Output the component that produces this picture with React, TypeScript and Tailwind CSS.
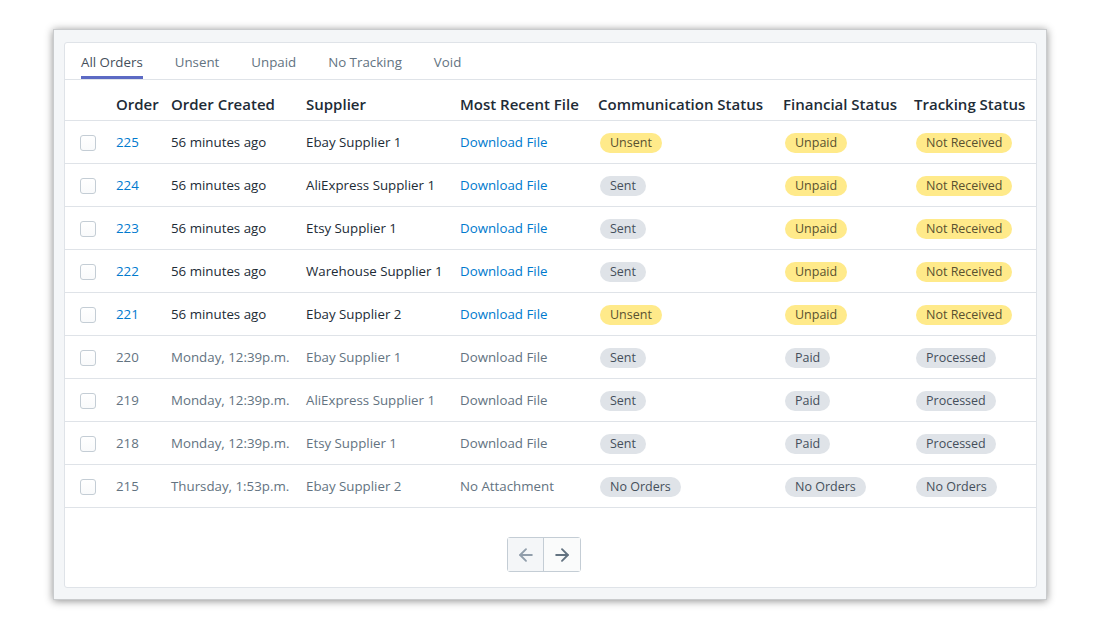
import { ArrowLeft, ArrowRight } from 'lucide-react';

type Tone = 'yellow' | 'gray';

interface Row {
  id: string;
  created: string;
  supplier: string;
  file: string;
  comm: [string, Tone];
  fin: [string, Tone];
  track: [string, Tone];
  active: boolean;
}

const rows: Row[] = [
  { id: '225', created: '56 minutes ago', supplier: 'Ebay Supplier 1', file: 'Download File', comm: ['Unsent', 'yellow'], fin: ['Unpaid', 'yellow'], track: ['Not Received', 'yellow'], active: true },
  { id: '224', created: '56 minutes ago', supplier: 'AliExpress Supplier 1', file: 'Download File', comm: ['Sent', 'gray'], fin: ['Unpaid', 'yellow'], track: ['Not Received', 'yellow'], active: true },
  { id: '223', created: '56 minutes ago', supplier: 'Etsy Supplier 1', file: 'Download File', comm: ['Sent', 'gray'], fin: ['Unpaid', 'yellow'], track: ['Not Received', 'yellow'], active: true },
  { id: '222', created: '56 minutes ago', supplier: 'Warehouse Supplier 1', file: 'Download File', comm: ['Sent', 'gray'], fin: ['Unpaid', 'yellow'], track: ['Not Received', 'yellow'], active: true },
  { id: '221', created: '56 minutes ago', supplier: 'Ebay Supplier 2', file: 'Download File', comm: ['Unsent', 'yellow'], fin: ['Unpaid', 'yellow'], track: ['Not Received', 'yellow'], active: true },
  { id: '220', created: 'Monday, 12:39p.m.', supplier: 'Ebay Supplier 1', file: 'Download File', comm: ['Sent', 'gray'], fin: ['Paid', 'gray'], track: ['Processed', 'gray'], active: false },
  { id: '219', created: 'Monday, 12:39p.m.', supplier: 'AliExpress Supplier 1', file: 'Download File', comm: ['Sent', 'gray'], fin: ['Paid', 'gray'], track: ['Processed', 'gray'], active: false },
  { id: '218', created: 'Monday, 12:39p.m.', supplier: 'Etsy Supplier 1', file: 'Download File', comm: ['Sent', 'gray'], fin: ['Paid', 'gray'], track: ['Processed', 'gray'], active: false },
  { id: '215', created: 'Thursday, 1:53p.m.', supplier: 'Ebay Supplier 2', file: 'No Attachment', comm: ['No Orders', 'gray'], fin: ['No Orders', 'gray'], track: ['No Orders', 'gray'], active: false },
];

const tabs = ['All Orders', 'Unsent', 'Unpaid', 'No Tracking', 'Void'];

const cols = 'grid grid-cols-[51px_55px_135px_154px_138px_185px_131px_123px]';

function Badge({ label, tone }: { label: string; tone: Tone }) {
  return (
    <span
      className={
        'ml-[2px] inline-flex h-5 items-center rounded-full px-[10px] text-[12.5px] leading-none ' +
        (tone === 'yellow' ? 'bg-[#ffea8a] text-[#595130]' : 'bg-[#dfe3e8] text-[#454f5b]')
      }
    >
      {label}
    </span>
  );
}

export default function App() {
  return (
    <div className="min-h-screen bg-white pt-[29px] font-['Open_Sans',sans-serif] text-[13.3px] text-[#212b36]">
      <div className="mx-auto w-[994px] border border-[#c9cbcd] bg-[#f4f6f8] pl-[10px] pr-[9px] pt-[12px] pb-[11px] shadow-[0_1px_8px_rgba(0,0,0,0.45)]">
        <div className="rounded-[3px] border border-[#dfe3e8] bg-white">
          {/* Tabs */}
          <div className="flex gap-8 border-b border-[#dfe3e8] pl-4">
            {tabs.map((t, i) => (
              <div
                key={t}
                className={
                  'pt-[9px] pb-[3px] leading-[21px] border-b-[3px] ' +
                  (i === 0 ? 'border-[#5c6ac4] text-[#454f5b]' : 'border-transparent text-[#637381]')
                }
              >
                {t}
              </div>
            ))}
          </div>

          {/* Header */}
          <div className={cols + ' h-[41px] items-end pb-[5px] border-b border-[#dfe3e8] text-[15px] leading-[22px] font-semibold text-[#212b36]'}>
            <div />
            <div>Order</div>
            <div>Order Created</div>
            <div>Supplier</div>
            <div>Most Recent File</div>
            <div>Communication Status</div>
            <div>Financial Status</div>
            <div>Tracking Status</div>
          </div>

          {/* Rows */}
          {rows.map((r) => (
            <div key={r.id} className={cols + ' h-[43px] items-center pt-[2px] border-b border-[#dfe3e8]'}>
              <div className="pl-[15px]">
                <span className="block h-4 w-4 rounded-[3px] border border-[#c4cdd5] bg-gradient-to-b from-white to-[#f9fafb]" />
              </div>
              <div className={r.active ? 'text-[#007ace]' : 'text-[#637381]'}>{r.id}</div>
              <div className={r.active ? 'text-[#212b36]' : 'text-[#637381]'}>{r.created}</div>
              <div className={r.active ? 'text-[#212b36]' : 'text-[#637381]'}>{r.supplier}</div>
              <div className={r.active ? 'text-[#007ace]' : 'text-[#637381]'}>{r.file}</div>
              <div>
                <Badge label={r.comm[0]} tone={r.comm[1]} />
              </div>
              <div>
                <Badge label={r.fin[0]} tone={r.fin[1]} />
              </div>
              <div>
                <Badge label={r.track[0]} tone={r.track[1]} />
              </div>
            </div>
          ))}

          {/* Pagination */}
          <div className="flex justify-center pt-[29px] pb-[15px] pr-[13px]">
            <div className="flex h-[35px] rounded-[3px] border border-[#c4cdd5]">
              <button className="flex w-9 items-center justify-center border-r border-[#c4cdd5] bg-[#f4f6f8] text-[#919eab]">
                <ArrowLeft size={20} strokeWidth={2.25} />
              </button>
              <button className="flex w-9 items-center justify-center bg-[#fafbfb] text-[#637381]">
                <ArrowRight size={20} strokeWidth={2.25} />
              </button>
            </div>
          </div>
        </div>
      </div>
    </div>
  );
}
